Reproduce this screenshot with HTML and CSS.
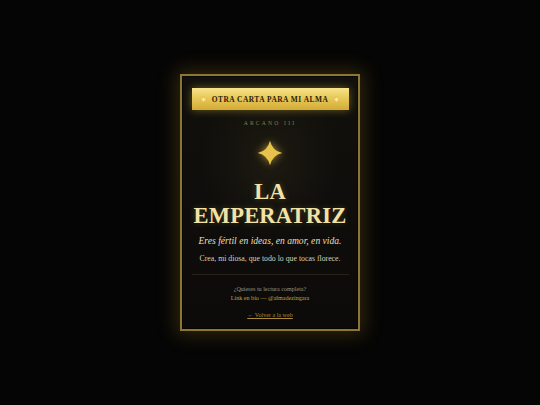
FILE: index.html
```html
<!DOCTYPE html>
<html lang="es">
<head>
<meta charset="utf-8">
<title>La Emperatriz</title>
<link rel="stylesheet" href="styles.css">
</head>
<body>
<main class="card">
  <button class="btn">
    <svg class="spark" viewBox="0 0 10 10"><path d="M5 0 Q5.8 4.2 10 5 Q5.8 5.8 5 10 Q4.2 5.8 0 5 Q4.2 4.2 5 0Z"/></svg>
    <span>OTRA CARTA PARA MI ALMA</span>
    <svg class="spark" viewBox="0 0 10 10"><path d="M5 0 Q5.8 4.2 10 5 Q5.8 5.8 5 10 Q4.2 5.8 0 5 Q4.2 4.2 5 0Z"/></svg>
  </button>
  <div class="arcano">ARCANO III</div>
  <svg class="star" viewBox="0 0 40 40"><path d="M20 1 Q23.5 16.5 39 20 Q23.5 23.5 20 39 Q16.5 23.5 1 20 Q16.5 16.5 20 1Z"/></svg>
  <h1 class="title">LA<br>EMPERATRIZ</h1>
  <p class="lead">Eres fértil en ideas, en amor, en vida.</p>
  <p class="sub">Crea, mi diosa, que todo lo que tocas florece.</p>
  <hr class="divider">
  <p class="cta">¿Quieres tu lectura completa?<br><span class="gold">Link en bio — @almadezingara</span></p>
  <a class="back" href="#">← Volver a la web</a>
</main>
</body>
</html>
```
FILE: styles.css
```css
html, body {
  margin: 0;
  padding: 0;
  height: 100%;
}
body {
  background: #050505;
  display: flex;
  align-items: center;
  justify-content: center;
  font-family: "Liberation Serif", "DejaVu Serif", serif;
}
.card {
  box-sizing: border-box;
  width: 180px;
  height: 257px;
  border: 2px solid #8c7535;
  background:
    radial-gradient(ellipse 70px 80px at 50% 34%, rgba(60, 52, 30, 0.3), rgba(0,0,0,0) 100%),
    linear-gradient(180deg, #11100c 0%, #0e0d0b 60%, #0c0b09 100%);
  box-shadow: 0 0 18px 4px rgba(200, 160, 40, 0.22), inset 0 0 0 1px rgba(0,0,0,0.4);
  padding: 12px 10px 0;
  display: flex;
  flex-direction: column;
  align-items: center;
  text-align: center;
}
.btn {
  width: 157px;
  height: 22px;
  flex: none;
  border: 0;
  padding: 0;
  background: linear-gradient(180deg, #f6e48c 0%, #e8c95a 45%, #d3ab36 100%);
  box-shadow: 0 0 8px rgba(230, 190, 60, 0.45);
  display: flex;
  align-items: center;
  justify-content: center;
  gap: 5px;
  font-family: "Liberation Serif", serif;
  font-weight: bold;
  font-size: 7.4px;
  letter-spacing: 0.5px;
  color: #2b2108;
}
.spark {
  width: 7px;
  height: 7px;
  fill: #fbe98a;
  stroke: #c99a2a;
  stroke-width: 0.4;
}
.arcano {
  margin-top: 9px;
  font-size: 5.6px;
  letter-spacing: 2.2px;
  color: #8d7b47;
  line-height: 8px;
}
.star {
  margin-top: 13px;
  width: 26px;
  height: 26px;
  fill: #e9c24b;
  filter: drop-shadow(0 0 4px rgba(240, 195, 70, 0.7));
}
.title {
  margin: 14px 0 0;
  font-family: "Liberation Serif", serif;
  font-weight: bold;
  font-size: 22.5px;
  line-height: 24px;
  letter-spacing: 0.2px;
  color: #f1e3a8;
  text-shadow: 0 0 6px rgba(240, 210, 120, 0.25);
}
.lead {
  margin: 7px 0 0;
  font-style: italic;
  font-size: 9.6px;
  line-height: 12px;
  color: #ebdfb5;
}
.sub {
  margin: 7px 0 0;
  font-size: 7.8px;
  line-height: 10px;
  color: #d8cfb5;
}
.divider {
  width: 157px;
  margin: 10px 0 0;
  border: 0;
  border-top: 1px solid #27231a;
}
.cta {
  margin: 10px 0 0;
  font-size: 6.1px;
  line-height: 9px;
  color: #9c9480;
}
.gold {
  color: #c6a242;
}
.back {
  margin-top: 8px;
  font-size: 6.1px;
  line-height: 9px;
  color: #a9893a;
  text-decoration: underline;
}
```
